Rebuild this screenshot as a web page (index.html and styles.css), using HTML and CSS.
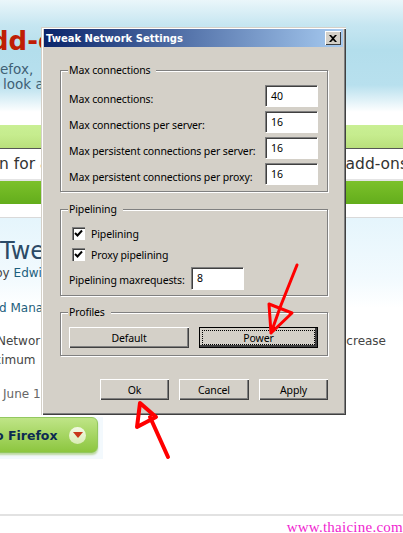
FILE: index.html
```html
<!DOCTYPE html>
<html lang="en">
<head>
<meta charset="utf-8">
<title>Tweak Network Settings</title>
<link rel="stylesheet" href="styles.css">
</head>
<body>
<div class="page">
  <header class="hero">
    <h1 class="hero-title">dd-o</h1>
    <p class="hero-line">efox,</p>
    <p class="hero-line hero-line2">look a</p>
  </header>
  <div class="band-light"></div>
  <div class="search-row"><span>n for a</span><span class="search-end">add-ons</span></div>
  <div class="band-dark"></div>
  <div class="crumb-row"></div>
  <main class="detail">
    <h2 class="addon-name">Twe</h2>
    <p class="addon-by">by <a>Edwin</a></p>
    <p class="addon-cat">d Mana</p>
    <p class="addon-desc"><span>Networ</span><span class="desc-end">crease</span></p>
    <p class="addon-desc2">ximum</p>
    <p class="addon-date">June 1</p>
    <div class="cta-wrap">
      <div class="cta">
        <span>o Firefox</span>
        <span class="cta-circle"><svg width="10" height="6" viewBox="0 0 10 6"><path d="M0 0h10L5 6z" fill="#c8371a"/></svg></span>
      </div>
    </div>
  </main>
  <footer class="footer">www.thaicine.com</footer>
</div>

<section class="dialog">
  <div class="titlebar">
    <span>Tweak Network Settings</span>
    <span class="close"><svg width="8" height="7" viewBox="0 0 8 7"><path d="M0 0h2l2 2 2-2h2L5 3.500 8 7H6L4 5 2 7H0l3-3.500z" fill="#000"/></svg></span>
  </div>
  <div class="dialog-body">
    <div class="group group-max">
      <span class="legend">Max connections</span>
      <div class="row"><span class="label">Max connections:</span><span class="field">40</span></div>
      <div class="row"><span class="label">Max connections per server:</span><span class="field">16</span></div>
      <div class="row"><span class="label">Max persistent connections per server:</span><span class="field">16</span></div>
      <div class="row"><span class="label">Max persistent connections per proxy:</span><span class="field">16</span></div>
    </div>
    <div class="group group-pipe">
      <span class="legend">Pipelining</span>
      <div class="check-row"><span class="check"><svg width="9" height="9" viewBox="0 0 9 9"><path d="M1 4l2.500 2.500L8 1.500" fill="none" stroke="#000" stroke-width="2"/></svg></span>Pipelining</div>
      <div class="check-row"><span class="check"><svg width="9" height="9" viewBox="0 0 9 9"><path d="M1 4l2.500 2.500L8 1.500" fill="none" stroke="#000" stroke-width="2"/></svg></span>Proxy pipelining</div>
      <div class="req-row"><span class="label req-label">Pipelining maxrequests:</span><span class="field field-req">8</span></div>
    </div>
    <div class="group group-prof">
      <span class="legend">Profiles</span>
      <div class="prof-row">
        <span class="btn btn-prof">Default</span>
        <span class="btn btn-prof btn-focus">Power</span>
      </div>
    </div>
    <div class="actions">
      <span class="btn btn-ok">Ok</span>
      <span class="btn btn-cancel">Cancel</span>
      <span class="btn btn-apply">Apply</span>
    </div>
  </div>
</section>

<svg class="scribble" width="403" height="533" viewBox="0 0 403 533">
  <path d="M297 265L281 305L271 333M271 333L269 304L292 313L271 333" fill="none" stroke="#f00" stroke-width="3" stroke-linejoin="round" stroke-linecap="round"/>
  <path d="M168 457L150 417M140 403L137 427L156 417L140 403" fill="none" stroke="#f00" stroke-width="4" stroke-linejoin="round" stroke-linecap="round"/>
</svg>
</body>
</html>
```
FILE: styles.css
```css
* { box-sizing: border-box; }
html, body { margin: 0; padding: 0; }
body {
  position: relative;
  width: 403px;
  height: 533px;
  overflow: hidden;
  background: #fff;
  font-family: "DejaVu Sans", sans-serif;
}
p, h1, h2 { margin: 0; }

.hero {
  height: 125px;
  padding: 22px 0 0 0;
  background: linear-gradient(#eaf6fa 0, #c6e6f1 25px, #b3deec 50px, #b8e0ee 85px, #fff 112px);
  color: #3f6175;
}
.hero-title {
  margin-left: -10px;
  height: 40px;
  font-size: 26px;
  line-height: 38px;
  font-weight: 700;
  color: #bf1e05;
  white-space: nowrap;
}
.hero-line {
  font-size: 13.500px;
  line-height: 15px;
  white-space: nowrap;
}
.hero-line2 { margin-left: 3px; }
.band-light {
  height: 23px;
  background: linear-gradient(#c9ef94 0, #c6ec8e 10px, #b9df7c 23px);
  border-bottom: 1px solid #b9df7c;
}
.search-row {
  height: 33px;
  display: flex;
  justify-content: space-between;
  align-items: center;
  margin-left: -1px;
  border-top: 1px solid #555;
  border-bottom: 2px solid #e4e4e4;
  font-size: 15.500px;
  color: #333;
  white-space: nowrap;
}
.search-end { margin-right: -5px; }
.band-dark {
  height: 23px;
  background: linear-gradient(#7cc12a, #63ad1c);
}
.crumb-row {
  height: 14px;
  border-bottom: 1px solid #d9d9d9;
}
.detail {
  height: 296px;
  padding-top: 18px;
  background: linear-gradient(#e5f5fc 0, #f2fafe 60px, #fff 90px);
  color: #444;
}
.addon-name {
  height: 30px;
  font-size: 24px;
  line-height: 30px;
  font-weight: 400;
  color: #2b4a66;
}
.addon-by {
  margin: -1px 0 0 -5px;
  font-size: 12px;
  line-height: 16px;
  color: #444;
}
.addon-by a { color: #1d5f7d; }
.addon-cat {
  margin: 19px 0 0 -1px;
  font-size: 12px;
  line-height: 16px;
  color: #1d5f7d;
}
.addon-desc {
  display: flex;
  justify-content: space-between;
  margin: 17px 0 0 -3px;
  font-size: 12px;
  line-height: 16px;
}
.desc-end { margin-right: 17px; }
.addon-desc2 {
  margin: 3px 0 0 -6px;
  font-size: 12px;
  line-height: 16px;
}
.addon-date {
  margin: 18px 0 0 3px;
  font-size: 12px;
  line-height: 16px;
  color: #666;
}
.cta-wrap {
  width: 103px;
  margin-top: 15px;
  padding-right: 5px;
  height: 42px;
  background: #f3f9fd;
}
.cta {
  height: 36px;
  display: flex;
  align-items: center;
  justify-content: space-between;
  padding-right: 11px;
  margin-left: -6px;
  border: 1px solid #93c860;
  border-radius: 0 6px 6px 0;
  background: linear-gradient(#bfe587, #8cc63f);
  box-shadow: 0 2px 2px #bcd8a0;
  font-size: 12.500px;
  font-weight: 700;
  color: #0c2b52;
  white-space: nowrap;
}
.cta-circle {
  width: 17px;
  height: 17px;
  display: flex;
  align-items: center;
  justify-content: center;
  border-radius: 50%;
  background: linear-gradient(#f4f9e6, #d9ecb4);
}
.footer {
  height: 19px;
  border-top: 2px solid #e2e2e2;
  text-align: right;
  font-family: "Liberation Serif", serif;
  font-size: 15px;
  line-height: 22px;
  letter-spacing: 0.250px;
  color: #f01fd0;
  white-space: nowrap;
}

/* Dialog floats over the page */
.dialog {
  position: absolute;
  left: 41px;
  top: 27px;
  width: 305px;
  height: 388px;
  padding: 2px 3px 0;
  background: #d4d0c8;
  box-shadow: inset 1px 1px 0 #d4d0c8, inset 2px 2px 0 #fff, inset -1px -1px 0 #404040, inset -2px -2px 0 #808080;
  font-family: "Noto Sans", sans-serif;
  font-size: 10.500px;
  letter-spacing: -0.130px;
  color: #000;
}
.titlebar {
  height: 18px;
  display: flex;
  align-items: center;
  justify-content: space-between;
  padding: 0 2px;
  background: linear-gradient(90deg, #0a246a, #a6caf0);
  color: #fff;
  font-family: "DejaVu Sans", sans-serif;
  font-weight: 700;
  font-size: 10px;
  letter-spacing: 0;
  white-space: nowrap;
}
.close {
  width: 16px;
  height: 14px;
  display: flex;
  align-items: center;
  justify-content: center;
  background: #d4d0c8;
  box-shadow: inset 1px 1px 0 #fff, inset -1px -1px 0 #404040;
}
.dialog-body {
  padding: 23px 15px 0 16px;
  display: flex;
  flex-direction: column;
}
.group {
  position: relative;
  width: 268px;
  border: 1px solid #808080;
  box-shadow: 1px 1px 0 #fff, inset 1px 1px 0 #fff;
}
.legend {
  position: absolute;
  top: -8px;
  left: 7px;
  padding: 0 6px 0 1px;
  background: #d4d0c8;
  line-height: 14px;
  white-space: nowrap;
}
.group-max {
  height: 122px;
  padding: 14px 10px 0 8px;
  display: flex;
  flex-direction: column;
  gap: 5px;
}
.row {
  height: 21px;
  display: flex;
  align-items: center;
  justify-content: space-between;
  white-space: nowrap;
}
.label { padding-top: 6px; }
.field {
  width: 52px;
  height: 21px;
  padding-left: 6px;
  display: flex;
  align-items: center;
  background: #fff;
  box-shadow: inset 1px 1px 0 #808080, inset 2px 2px 0 #404040, 1px 1px 0 #fff;
}
.group-pipe {
  height: 87px;
  margin-top: 17px;
  padding: 17px 0 0 8px;
}
.check-row {
  height: 13px;
  margin: 0 0 8px 3px;
  display: flex;
  align-items: center;
  gap: 6px;
  white-space: nowrap;
}
.check {
  width: 13px;
  height: 13px;
  display: flex;
  align-items: center;
  justify-content: center;
  background: #fff;
  box-shadow: inset 1px 1px 0 #808080, inset 2px 2px 0 #404040, inset -1px -1px 0 #fff;
}
.req-row {
  margin-top: -2px;
  height: 22px;
  display: flex;
  align-items: center;
  white-space: nowrap;
}
.req-label { width: 122px; padding-top: 4px; }
.field-req { height: 22px; }
.group-prof {
  height: 44px;
  margin-top: 16px;
  padding: 14px 0 0 8px;
}
.prof-row {
  display: flex;
  gap: 10px;
}
.btn {
  height: 21px;
  display: flex;
  align-items: center;
  justify-content: center;
  background: #d4d0c8;
  box-shadow: inset 1px 1px 0 #fff, inset -1px -1px 0 #404040, inset -2px -2px 0 #808080;
}
.btn-prof { width: 120px; }
.btn-focus {
  width: 119px;
  border: 1px solid #000;
  box-shadow: inset -1px -1px 0 #404040, inset -2px -2px 0 #404040;
  outline: 1px dotted #000;
  outline-offset: -4px;
}
.actions {
  display: flex;
  justify-content: flex-end;
  gap: 10px;
  margin-top: 23px;
}
.btn-ok { width: 69px; }
.btn-cancel { width: 70px; }
.btn-apply { width: 69px; }

.scribble {
  position: absolute;
  left: 0;
  top: 0;
  pointer-events: none;
}
```
